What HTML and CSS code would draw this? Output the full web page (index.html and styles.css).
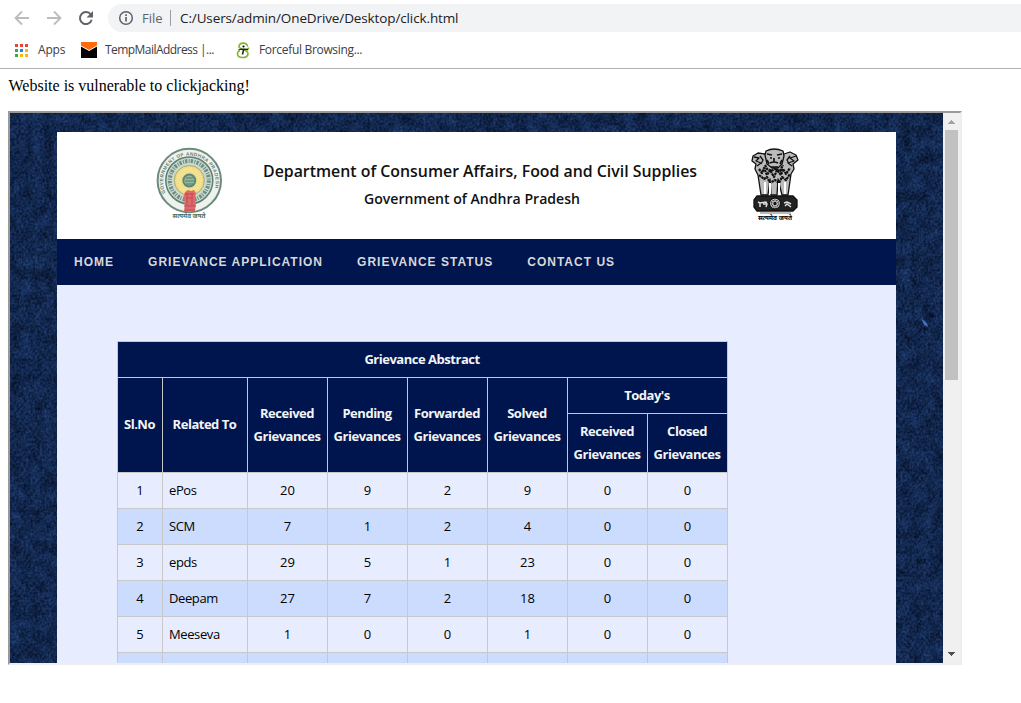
FILE: index.html
```html
<!DOCTYPE html>
<html lang="en">
<head>
<meta charset="utf-8">
<title>click.html</title>
<link rel="stylesheet" href="styles.css">
</head>
<body>
<header class="browser">
  <div class="toolbar">
    <svg class="tools" width="108" height="28" viewBox="0 4 108 28" fill="none" stroke-width="1.8">
      <path d="M29 18H16M22 11.5 15.5 18l6.500 6.500" stroke="#babcbe"/>
      <path d="M47 18H60M54 11.500 60.500 18 54 24.500" stroke="#babcbe"/>
      <path d="M90.800 14.500A6 6 0 1 0 91.700 19.800" stroke="#5f6368" stroke-width="2"/>
      <path d="M93 11v6.500h-6.500z" fill="#5f6368"/>
    </svg>
    <div class="address">
      <svg width="16" height="16" viewBox="0 0 16 16"><circle cx="8" cy="8" r="6.300" fill="none" stroke="#5f6368" stroke-width="1.500"/><path d="M7.200 7h1.700v4.500H7.200zM7.200 4.300h1.700V6H7.200z" fill="#5f6368"/></svg>
      <span class="scheme">File</span><i class="divider"></i><span class="path">C:/Users/admin/OneDrive/Desktop/click.html</span>
    </div>
  </div>
  <nav class="bookmarks">
    <svg class="apps" width="13" height="13" viewBox="0 0 13 13"><path d="M0 0h3v3H0zM5 0h3v3H5zM10 0h3v3h-3z" fill="#ea4335"/><path d="M0 5h3v3H0zM0 10h3v3H0z" fill="#34a853"/><path d="M5 5h3v3H5z" fill="#1a85f0"/><path d="M5 10h3v3H5z" fill="#34a853"/><path d="M10 5h3v3h-3zM10 10h3v3h-3zM5 10h3v3H5z" fill="#fbb606"/></svg>
    <span class="label-apps">Apps</span>
    <svg class="mail" width="16" height="16" viewBox="0 0 16 16"><path d="M0 0h16v16H0z"/><path d="M0 0h16v4L8 8.500 0 4z" fill="#ff6a0c"/><path d="M0 4l8 4.500L16 4" fill="none" stroke="#fff"/></svg>
    <span class="label-mail">TempMailAddress |...</span>
    <svg class="force" width="14" height="17" viewBox="0 0 14 17"><path d="M11.500 4.500C11.500 0 3 0 3 4.800c0 3 9.500 2.500 9 7-.5 5-10.500 5-10.500 0 0-2.500 2.500-3.300 2.500-3.300M10 8.500s2.500-.5 2.500-3" fill="none" stroke="#84b52f" stroke-width="1.600"/><circle cx="7.500" cy="4.500" r="1.100"/><path d="M1.500 8q3.500-2 10.500-1.300V8H8.300l-1 4.500H5.700l1-4.500z" fill="#222"/></svg>
    <span class="label-force">Forceful Browsing...</span>
  </nav>
</header>
<main class="document">
  <p class="notice">Website is vulnerable to clickjacking!</p>
  <section class="frame">
    <div class="view">
      <svg class="texture" width="933" height="550">
        <filter id="felt" x="0" y="0" width="100%" height="100%" color-interpolation-filters="sRGB">
          <feTurbulence type="fractalNoise" baseFrequency="0.091 0.077" numOctaves="4" seed="6"/>
          <feColorMatrix values=".08 .02 0 0 .01  .14 .03 0 0 .075  .23 .06 0 0 .17  0 0 0 0 1" result="cloud"/>
          <feTurbulence type="fractalNoise" baseFrequency="0.43 0.39" numOctaves="2" seed="9"/>
          <feColorMatrix values=".16 0 0 0 0  .22 0 0 0 0  .32 0 0 0 0  0 0 0 0 1"/>
          <feComposite in2="cloud" operator="arithmetic" k2="1" k3="1" k4="-.1"/>
          <feColorMatrix values="1 0 0 0 .03  0 1 0 0 -.015  0 0 1 0 -.07  0 0 0 0 1"/>
        </filter>
        <rect width="933" height="550" filter="url(#felt)"/>
        <path d="M911 205l6 5 1 4-4-2z" fill="#426fbc"/><path d="M919 200l5 1v4l-4-1z" fill="#061128"/>
      </svg>
      <div class="site">
        <header class="banner">
          <svg width="839" height="107" viewBox="57 132 839 107">
            <defs><path id="ring" d="M165.500 193a26.300 26.300 0 1 1 47.600 0"/></defs>
            <g fill="none">
              <circle cx="189.300" cy="180.500" r="31.700" fill="#eef2ed" stroke="#6c8a7f" stroke-width="2"/>
              <circle cx="189.300" cy="180.500" r="23.500" fill="#cbd8d0" stroke="#5d7f72" stroke-width="1.500"/>
              <circle cx="189.300" cy="180.500" r="19.500" stroke="#6b8e80" stroke-width="4" stroke-dasharray="2.300 1.400 1 1.100"/>
              <circle cx="189.300" cy="180.500" r="15" fill="#eddc83" stroke="#b1a969"/>
              <circle cx="189.300" cy="180.500" r="10.500" stroke="#f5e9a5" stroke-width="5" stroke-dasharray="1 1.200"/>
              <circle cx="189.300" cy="180.500" r="6" fill="#97b79c" stroke="#5d8573" stroke-width="1.800"/>
              <path d="M186 178h7M185 181h9M186 184h7" stroke="#557f6c"/>
            </g>
            <text class="ringtext"><textPath href="#ring" textLength="100">GOVERNMENT OF ANDHRA PRADESH</textPath></text>
            <path d="M185 192l3-2 3 1 3-1 2 3-1 6 1 4-1 8H184l1-8-2-5z" fill="#e06a6a"/>
            <path d="M185 194h9M186 198h7M187 193v12M192 193v12M184 206h12M185 210h10" stroke="#c04c50"/>
            <text class="motto green" x="172.500" y="218" textLength="33" lengthAdjust="spacingAndGlyphs">सत्यमेव जयते</text>
            <text class="dept" x="263" y="177" textLength="434" lengthAdjust="spacingAndGlyphs">Department of Consumer Affairs, Food and Civil Supplies</text>
            <text class="govt" x="364" y="204" textLength="216" lengthAdjust="spacingAndGlyphs">Government of Andhra Pradesh</text>
            <g stroke="#111" stroke-width="1.300" fill="#bbb" stroke-linejoin="round">
              <path d="M765 154l-7-1-5 3-1 5 4 3-1 5 3 6 3 20h7l2-16 1 16h6l1-16 4 16h6l3-21 3-5-1-5 5-4-2-5-6-3-6 2z"/>
              <path d="M766 151q8-4 17 0l1 5-2 8-4 4h-6l-5-4-2-9z" fill="#bbb"/>
              <path d="M767 154l5 1M777 155l5-1M770 158h2M778 158h2M774 158v4M770 163q4-2 8 0M771 167h7M767 160l2 4M782 160l-2 4" fill="none" stroke-width="1.700"/>
              <path d="M754 157l5 1-3 3 5 2-4 3M760 156l3 4-2 4M790 156l-3 4 2 4M796 156l-6 2 4 3-6 2 4 3" fill="none"/>
              <path d="M759 169l3 4 2-5 3 7 3-5 4 7 3-7 4 5 2-6 3 5 4-6M759 175l5 4 3-2 3 6 5-3 4 3 3-6 4 3 4-6M765 165l2 4 4 2 4-2 5 2 3-6" fill="none" stroke-width="2.200" stroke-dasharray="2.500 .6"/>
              <path d="M765 182v12M770 183v11M779 183v11M785 182v12" stroke="#fff" stroke-width="2"/>
              <path d="M757 196h36l4 4v7l-4 4h-36l-3-4v-7z" fill="#222"/>
              <circle cx="775" cy="203.500" r="5.500" fill="#eee"/><circle cx="775" cy="203.500" r="3.600" stroke-dasharray="1 1"/><circle cx="775" cy="203.500" r="1" fill="#111"/>
              <path d="M758 202l2 1 6-1 1 2-1 3M760 203v4M763 204h3M784 203l3-1 4 2M785 206l2-2 4 3" stroke="#ddd" stroke-width="1.500" fill="none"/>
              <path d="M760 213h31" stroke-width="1" stroke="#777"/>
            </g>
            <text class="motto" x="758" y="220" textLength="34" lengthAdjust="spacingAndGlyphs">सत्यमेव जयते</text>
          </svg>
        </header>
        <nav class="menu"><a>HOME</a><a>GRIEVANCE APPLICATION</a><a>GRIEVANCE STATUS</a><a>CONTACT US</a></nav>
        <table class="abstract">
          <colgroup><col class="c-no"><col class="c-name"><col><col><col><col><col><col></colgroup>
          <thead>
            <tr class="r"><th colspan="8">Grievance Abstract</th></tr>
            <tr class="r"><th rowspan="2">Sl.No</th><th rowspan="2">Related To</th><th rowspan="2">Received<br>Grievances</th><th rowspan="2">Pending<br>Grievances</th><th rowspan="2">Forwarded<br>Grievances</th><th rowspan="2">Solved<br>Grievances</th><th colspan="2">Today's</th></tr>
            <tr class="tall"><th>Received<br>Grievances</th><th>Closed<br>Grievances</th></tr>
          </thead>
          <tbody>
            <tr class="r"><td>1</td><td class="name">ePos</td><td>20</td><td>9</td><td>2</td><td>9</td><td>0</td><td>0</td></tr>
            <tr class="r"><td>2</td><td class="name">SCM</td><td>7</td><td>1</td><td>2</td><td>4</td><td>0</td><td>0</td></tr>
            <tr class="r"><td>3</td><td class="name">epds</td><td>29</td><td>5</td><td>1</td><td>23</td><td>0</td><td>0</td></tr>
            <tr class="r"><td>4</td><td class="name">Deepam</td><td>27</td><td>7</td><td>2</td><td>18</td><td>0</td><td>0</td></tr>
            <tr class="r"><td>5</td><td class="name">Meeseva</td><td>1</td><td>0</td><td>0</td><td>1</td><td>0</td><td>0</td></tr>
            <tr class="r"><td></td><td></td><td></td><td></td><td></td><td></td><td></td><td></td></tr>
          </tbody>
        </table>
      </div>
    </div>
    <div class="scrollbar">
      <svg width="17" height="17"><path d="M8 7h1v1h1v1h1v1h1v1H5v-1h1V9h1V8h1z" fill="#a3a3a3"/></svg>
      <div class="thumb"></div>
      <svg class="down" width="17" height="17"><path d="M5 6h7v1h-1v1h-1v1H9v1H8V9H7V8H6V7H5z" fill="#505050"/></svg>
    </div>
  </section>
</main>
</body>
</html>
```
FILE: styles.css
```css
* { box-sizing: border-box; }
body { margin: 0; background: #fff; color: #000; overflow: hidden; }
svg { display: block; flex: none; }
.browser { height: 69px; padding-top: 4px; border-bottom: 1px solid #b3b3b3; font-family: "Open Sans", sans-serif; white-space: nowrap; }
.toolbar { display: flex; height: 28px; }
.address { flex: 1; display: flex; align-items: center; padding-left: 10px; background: #f1f3f4; border-radius: 14px 0 0 14px; font-size: 13.5px; }
.scheme { width: 20px; margin-left: 8px; color: #5f6368; font-size: 13px; }
.divider { width: 1px; height: 16px; margin: 0 9px 0 8px; background: #9b9ea2; }
.path { color: #202124; letter-spacing: -.12px; }
.bookmarks { display: flex; align-items: center; height: 36px; padding-left: 15px; font-size: 12px; line-height: 16px; color: #3c4043; }
.bookmarks span { padding-bottom: 1px; }
.label-apps { width: 28px; margin: 0 15px 0 10px; letter-spacing: -.2px; }
.label-mail { width: 110px; margin: 0 21px 0 8px; letter-spacing: -.55px; }
.label-force { margin-left: 9px; letter-spacing: -.32px; }
.document { padding: 8px; }
.notice { margin: 0 0 16px; padding-left: .5px; font: 16px/18px "Liberation Serif", serif; }
.frame { display: flex; width: 954px; height: 554px; border: 2px solid; border-color: #999 #eee #eee #999; }
.view { position: relative; width: 933px; height: 550px; padding: 19px 47px 0; overflow: hidden; }
.texture { position: absolute; top: 0; left: 0; }
.site { position: relative; width: 839px; height: 531px; background: #e7edff; overflow: hidden; }
.banner { height: 107px; background: #fff; }
.dept { font: 600 17px "Open Sans", sans-serif; fill: #111; }
.govt { font: 600 14.5px "Open Sans", sans-serif; fill: #111; }
.ringtext { font: 700 4.8px "Liberation Sans", sans-serif; fill: #5f7e73; }
.motto { font: 700 6px "Noto Sans", sans-serif; }
.green { fill: #4f6b5b; }
.menu { display: flex; gap: 34px; height: 46px; padding-left: 17px; background: #00154d; color: #d8d8d8; font: bold 12px/46px "Liberation Sans", sans-serif; letter-spacing: 1.01px; }
.abstract { width: 611px; margin: 56px 0 0 60px; border-collapse: collapse; table-layout: fixed; font: 13px/23px "Open Sans", sans-serif; text-align: center; }
.abstract th, .abstract td { padding: 0; border: 1px solid #c8c8c8; }
.abstract th { padding-right: 1px; background: #00154d; color: #f4f4f4; font-weight: 700; letter-spacing: -.48px; }
.abstract th[rowspan] { padding-bottom: 1px; }
.c-no { width: 45px; }
.c-name { width: 85px; }
.r { height: 36px; }
.tall { height: 59px; }
.abstract tbody tr:nth-child(even) { background: #ccdcff; }
.abstract td { font-weight: 500; }
.abstract .name { padding-left: 6px; text-align: left; letter-spacing: -.4px; }
.scrollbar { display: flex; flex-direction: column; width: 17px; background: #f0f0f0; }
.thumb { width: 13px; height: 250px; margin-left: 2px; background: #c1c1c1; }
.down { margin-top: auto; }
```
